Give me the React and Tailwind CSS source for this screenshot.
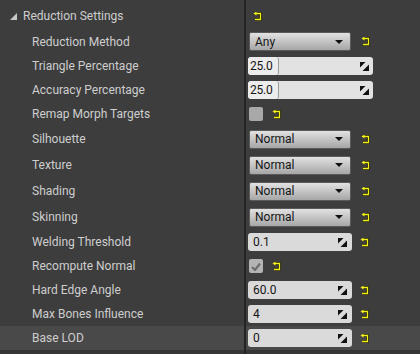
import React from "react"

function ResetIcon() {
  return (
    <svg width="9" height="9" viewBox="0 0 9 9" className="shrink-0">
      <path d="M3 1.5 H7.5 V7.5 H2" fill="none" stroke="#1a1a00" strokeWidth="2.6" />
      <path d="M3 1.5 H7.5 V7.5 H2" fill="none" stroke="#f2f21a" strokeWidth="1.3" />
      <path d="M0.5 1.5 L3.5 -0.5 L3.5 3.5 Z" fill="#f2f21a" />
    </svg>
  )
}

function SpinIcon() {
  return (
    <svg width="9" height="9" viewBox="0 0 9 9" className="shrink-0">
      <path d="M0 0 H5.5 L0 5.5 Z" fill="#111" />
      <path d="M9 2.5 V9 H2.5 Z" fill="#111" />
    </svg>
  )
}

function Dropdown({ value }) {
  return (
    <div className="flex items-center gap-[10px]">
      <div className="ml-[3px] flex h-[19px] w-[102px] items-center justify-between rounded-[2px] border border-[#5a5a5a] bg-gradient-to-b from-[#e2e2e2] to-[#a6a6a6] pl-[5px] pr-[7px] text-[12px] text-[#151515]">
        <span>{value}</span>
        <svg width="8" height="4" viewBox="0 0 8 4">
          <path d="M0 0 H8 L4 4 Z" fill="#111" />
        </svg>
      </div>
      <ResetIcon />
    </div>
  )
}

function NumberField({ value, wide }) {
  if (wide) {
    return (
      <div className="ml-[2px] flex h-[18px] w-[125px] items-center justify-between overflow-hidden rounded-[3px] bg-[#e2e2e2] pr-[4px] text-[12px] text-[#151515]">
        <div className="flex h-full w-[31px] shrink-0 items-center rounded-[3px] border-r border-[#9a9a9a] bg-[#ececec] pl-[2px] tracking-[-0.2px]">
          {value}
        </div>
        <SpinIcon />
      </div>
    )
  }
  return (
    <div className="flex items-center gap-[8px]">
      <div className="ml-[2px] flex h-[18px] w-[104px] items-center justify-between rounded-[3px] bg-[#dadada] pl-[5px] pr-[5px] text-[12px] text-[#151515]">
        <span>{value}</span>
        <SpinIcon />
      </div>
      <ResetIcon />
    </div>
  )
}

function Checkbox({ checked }) {
  return (
    <div className="flex items-center gap-[9px]">
      <div className={`ml-[3px] flex h-[14px] w-[14px] items-center justify-center rounded-[2px] ${checked ? "bg-[#b4b4b4]" : "bg-[#a9a9a9]"}`}>
        {checked && (
          <svg width="10" height="9" viewBox="0 0 10 9">
            <path d="M1 5 L4 8 L9 1.5" fill="none" stroke="#6e6e6e" strokeWidth="2.2" />
          </svg>
        )}
      </div>
      <ResetIcon />
    </div>
  )
}

const rows = [
  { label: "Reduction Method", h: "h-[25px]", el: <Dropdown value="Any" /> },
  { label: "Triangle Percentage", h: "h-[24px]", el: <NumberField value="25.0" wide /> },
  { label: "Accuracy Percentage", h: "h-[24px]", el: <NumberField value="25.0" wide /> },
  { label: "Remap Morph Targets", h: "h-[24px]", el: <Checkbox /> },
  { label: "Silhouette", h: "h-[26px]", el: <Dropdown value="Normal" /> },
  { label: "Texture", h: "h-[26px]", el: <Dropdown value="Normal" /> },
  { label: "Shading", h: "h-[26px]", el: <Dropdown value="Normal" /> },
  { label: "Skinning", h: "h-[26px]", el: <Dropdown value="Normal" /> },
  { label: "Welding Threshold", h: "h-[24px]", el: <NumberField value="0.1" /> },
  { label: "Recompute Normal", h: "h-[24px]", el: <Checkbox checked /> },
  { label: "Hard Edge Angle", h: "h-[24px]", el: <NumberField value="60.0" /> },
  { label: "Max Bones Influence", h: "h-[24px]", el: <NumberField value="4" /> },
  { label: "Base LOD", h: "h-[24px]", el: <NumberField value="0" />, hover: true },
]

export default function App() {
  return (
    <div className="flex h-[354px] w-[420px] flex-col overflow-hidden bg-[#3d3d3d] font-['Roboto','Liberation_Sans',sans-serif] text-[12px] text-[#cecece]">
      <div className="flex h-[29px]">
        <div className="flex w-[246px] items-center gap-[6px] border-r-2 border-[#242424] pl-[10px] pt-[3px]">
          <svg width="7" height="7" viewBox="0 0 7 7">
            <path d="M7 0 V7 H0 Z" fill="#c8c8c8" />
          </svg>
          <span>Reduction Settings</span>
        </div>
        <div className="flex items-center pl-[7px] pt-[3px]">
          <ResetIcon />
        </div>
      </div>
      {rows.map((r) => (
        <div key={r.label} className={`flex ${r.h} ${r.hover ? "bg-[#494949]" : ""}`}>
          <div className="flex w-[246px] items-center border-r-2 border-[#242424] pl-[32px]">
            {r.label}
          </div>
          <div className="flex items-center">{r.el}</div>
        </div>
      ))}
      <div className="flex flex-1 bg-[#353535]">
        <div className="w-[246px] border-r-2 border-[#242424]" />
      </div>
    </div>
  )
}
